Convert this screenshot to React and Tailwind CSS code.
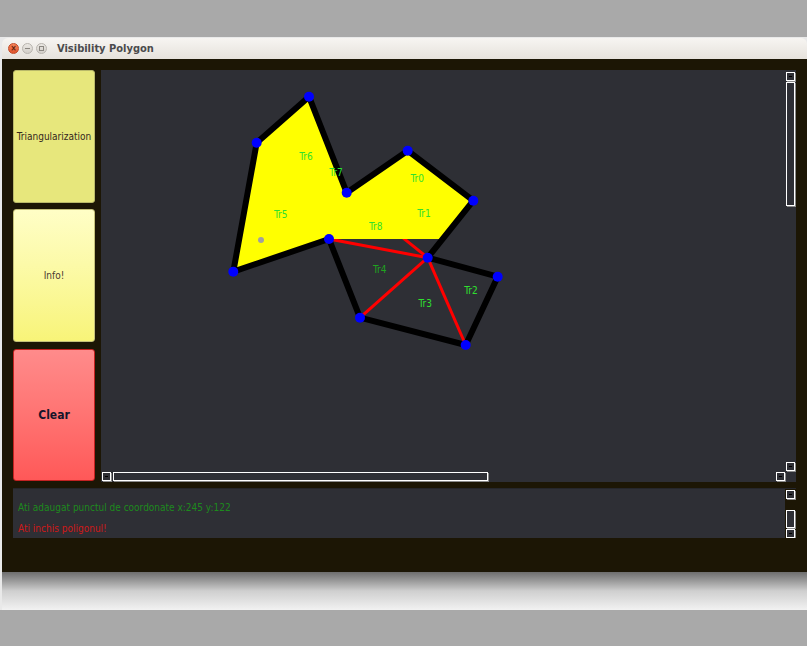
import React from "react";

const pts = {
  A: [208, 26.7],
  B: [155.7, 72.7],
  C: [132.3, 201.7],
  D: [228, 169],
  E: [259, 247.7],
  F: [364.7, 275],
  G: [396.7, 206.7],
  H: [326.7, 187.7],
  I: [372.3, 130.7],
  J: [306.7, 80.7],
  K: [245.7, 122.7],
};

const order = ["A", "K", "J", "I", "H", "G", "F", "E", "D", "C", "B"];

const labels = [
  ["Tr6", 205, 86.7, "#2fe02f"],
  ["Tr7", 235, 102.7, "#2fe02f"],
  ["Tr0", 316.3, 108.7, "#2fe02f"],
  ["Tr5", 179.7, 144.7, "#2fe02f"],
  ["Tr1", 323, 143.7, "#2fe02f"],
  ["Tr8", 274.7, 156.7, "#2fe02f"],
  ["Tr4", 278.7, 199, "#1fa41f"],
  ["Tr3", 324.3, 233.7, "#2fe02f"],
  ["Tr2", 370, 220, "#2fe02f"],
];

function Drawing() {
  const poly = order.map((k) => pts[k].join(",")).join(" ");
  const yellow = [pts.A, pts.K, pts.J, pts.I, [340.7, 169], pts.D, pts.C, pts.B]
    .map((p) => p.join(","))
    .join(" ");
  const red = [
    [pts.H, pts.D],
    [pts.H, pts.K],
    [pts.H, pts.E],
    [pts.H, pts.F],
  ];
  return (
    <svg width="695" height="412" className="block">
      {red.map(([a, b], i) => (
        <line key={i} x1={a[0]} y1={a[1]} x2={b[0]} y2={b[1]} stroke="#ff0000" strokeWidth="3" />
      ))}
      <polygon points={yellow} fill="#ffff00" />
      <polygon points={poly} fill="none" stroke="#000" strokeWidth="6" strokeLinejoin="round" />
      {order.map((k) => (
        <circle key={k} cx={pts[k][0]} cy={pts[k][1]} r="5" fill="#0000ff" />
      ))}
      <circle cx="160" cy="170" r="3" fill="#a0a0a0" />
      {labels.map(([t, x, y, c]) => (
        <text
          key={t}
          x={x}
          y={y}
          fill={c}
          fontSize="10"
          fontFamily="'DejaVu Sans', sans-serif"
          fontStretch="condensed"
          textAnchor="middle"
          dominantBaseline="central"
        >
          {t}
        </text>
      ))}
    </svg>
  );
}

function SBtn({ className }) {
  return (
    <div className={className}>
      <div className="w-[3px] h-[1px] bg-black" />
    </div>
  );
}

export default function App() {
  return (
    <div className="w-[807px] h-[646px] overflow-hidden bg-[#a9a9a9] flex flex-col font-['DejaVu_Sans',sans-serif] font-stretch-condensed">
      <div className="h-[37px] shrink-0" />
      <div className="h-[573px] shrink-0 bg-[#e9e9e9] flex flex-col pl-[2px] pt-[1px]">
        <div className="w-[805px] h-[534px] shrink-0 flex flex-col">
          {/* title bar */}
          <div className="h-[21px] shrink-0 rounded-t-[6px] bg-linear-to-b from-[#f7f5f2] to-[#e6e2dc] flex items-center pl-[6px]">
            <div className="w-[11px] h-[11px] rounded-full bg-linear-to-b from-[#f7845a] to-[#e0522a] border border-[#c24a26] flex items-center justify-center text-[8px] leading-none text-[#5a1e0c] font-bold">
              ×
            </div>
            <div className="ml-[3px] w-[11px] h-[11px] rounded-full bg-linear-to-b from-[#ebe8e3] to-[#d3cfc9] border border-[#b8b4ae] flex items-center justify-center">
              <div className="w-[5px] h-[1px] bg-[#8a8680]" />
            </div>
            <div className="ml-[3px] w-[11px] h-[11px] rounded-full bg-linear-to-b from-[#ebe8e3] to-[#d3cfc9] border border-[#b8b4ae] flex items-center justify-center">
              <div className="w-[5px] h-[5px] border border-[#8a8680]" />
            </div>
            <span className="ml-[10px] text-[11px] font-bold text-[#4a4a4c] leading-none">Visibility Polygon</span>
          </div>
          {/* body */}
          <div className="flex-1 bg-[#1c1605] pl-[11px] pt-[11px] flex flex-col">
            <div className="flex gap-[6px] h-[412px]">
              <div className="w-[82px] flex flex-col">
                <div className="h-[133px] rounded-[3px] border border-[#b9b96a] bg-[#e7e77c] flex items-center justify-center text-[10px] text-[#35281c]">
                  Triangularization
                </div>
                <div className="mt-[6px] h-[133px] rounded-[3px] border border-[#c4c07a] bg-linear-to-b from-[#fffec6] to-[#f8f478] flex items-center justify-center text-[10px] text-[#4a3a30]">
                  Info!
                </div>
                <div className="mt-[7px] h-[132px] rounded-[3px] border border-[#c42222] bg-linear-to-b from-[#ff8b8b] to-[#ff5858] flex items-center justify-center text-[12px] font-bold text-[#15152a]">
                  Clear
                </div>
              </div>
              <div className="relative w-[695px] h-[412px] bg-[#2e2f35] overflow-hidden">
                <Drawing />
                {/* vertical scrollbar */}
                <SBtn className="absolute left-[685px] top-[2px] w-[9px] h-[9px] border border-white shadow-[1px_1px_0_#8a8a8a] flex items-center justify-center" />
                <div className="absolute left-[685px] top-[12px] w-[9px] h-[124px] border border-white shadow-[1px_1px_0_#8a8a8a]" />
                <SBtn className="absolute left-[685px] top-[392px] w-[9px] h-[9px] border border-white shadow-[1px_1px_0_#8a8a8a] flex items-center justify-center" />
                {/* horizontal scrollbar */}
                <SBtn className="absolute left-[1px] top-[402px] w-[9px] h-[9px] border border-white shadow-[1px_1px_0_#8a8a8a] flex items-center justify-center" />
                <div className="absolute left-[12px] top-[402px] w-[375px] h-[9px] border border-white shadow-[1px_1px_0_#8a8a8a]" />
                <SBtn className="absolute left-[675px] top-[402px] w-[9px] h-[9px] border border-white shadow-[1px_1px_0_#8a8a8a] flex items-center justify-center" />
              </div>
            </div>
            <div className="mt-[6px] w-[783px] h-[50px] relative bg-[#2e2f35] border-t border-[#25262b] overflow-hidden">
              <div className="-mt-[18px] pl-[5px] text-[10px]">
                <div className="leading-[26px] text-[#1d8a1d]">Ati adaugat punctul de coordonate x:230 y:249</div>
                <div className="leading-[21px] text-[#1d8a1d]">Ati adaugat punctul de coordonate x:245 y:122</div>
                <div className="leading-[21px] text-[#d01818]">Ati inchis poligonul!</div>
              </div>
              <div className="absolute left-[772px] top-0 w-[11px] h-full bg-[#1c1605]">
                <SBtn className="absolute left-[1px] top-[1px] w-[9px] h-[9px] bg-[#2e2f35] border border-white shadow-[1px_1px_0_#8a8a8a] flex items-center justify-center" />
                <div className="absolute left-[1px] top-[21px] w-[9px] h-[18px] bg-[#2e2f35] border border-white shadow-[1px_1px_0_#8a8a8a]" />
                <SBtn className="absolute left-[1px] top-[40px] w-[9px] h-[9px] bg-[#2e2f35] border border-white shadow-[1px_1px_0_#8a8a8a] flex items-center justify-center" />
              </div>
            </div>
          </div>
        </div>
        <div className="h-[38px] shrink-0 bg-linear-to-b from-[#6e6e6e] via-[#cfcfcf] to-[#f2f2f2]" />
      </div>
    </div>
  );
}
